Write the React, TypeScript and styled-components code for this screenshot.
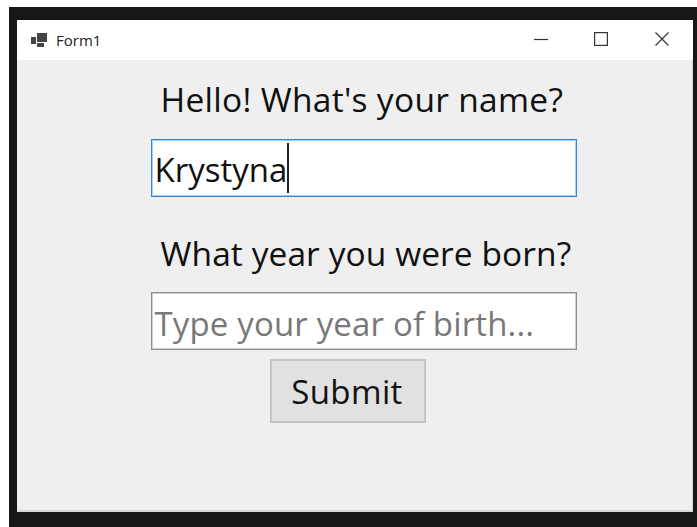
import React from "react";
import styled, { createGlobalStyle } from "styled-components";

const GlobalStyle = createGlobalStyle`
  html, body {
    margin: 0;
    padding: 0;
    background: #ffffff;
  }
`;

const App = () => {
  return (
    <>
      <GlobalStyle />
      <Screen>
        <Frame>
          <Window>
            <TitleBar>
              <AppIcon viewBox="0 0 16 14">
                <rect x="0" y="4" width="5" height="7" fill="#444" />
                <rect x="6" y="0" width="10" height="9" fill="#444" />
                <rect x="6" y="10" width="7" height="4" fill="#444" />
              </AppIcon>
              <Title>Form1</Title>
              <Controls>
                <ControlButton>
                  <svg width="14" height="14" viewBox="0 0 14 14">
                    <path d="M0 7.5h14" stroke="#333" strokeWidth="1.2" fill="none" />
                  </svg>
                </ControlButton>
                <ControlButton>
                  <svg width="14" height="14" viewBox="0 0 14 14">
                    <rect x="0.6" y="0.6" width="12.8" height="12.8" stroke="#333" strokeWidth="1.2" fill="none" />
                  </svg>
                </ControlButton>
                <ControlButton>
                  <svg width="14" height="14" viewBox="0 0 14 14">
                    <path d="M0.5 0.5l13 13M13.5 0.5l-13 13" stroke="#333" strokeWidth="1.2" fill="none" />
                  </svg>
                </ControlButton>
              </Controls>
            </TitleBar>
            <Content>
              <Label $tracking={0.3}>Hello! What's your name?</Label>
              <TextBox $focused>
                Krystyna
                <Caret />
              </TextBox>
              <SecondLabel $tracking={0.08}>What year you were born?</SecondLabel>
              <TextBox $placeholder>Type your year of birth...</TextBox>
              <SubmitRow>
                <SubmitButton>Submit</SubmitButton>
              </SubmitRow>
            </Content>
          </Window>
        </Frame>
      </Screen>
    </>
  );
};

export default App;

const Screen = styled.div`
  width: 697px;
  height: 527px;
  padding: 7px 0 0 9px;
  box-sizing: border-box;
  overflow: hidden;
`;

const Frame = styled.div`
  height: 100%;
  background: #171717;
  padding: 13px 4px 15px 8px;
  box-sizing: border-box;
`;

const Window = styled.div`
  height: 100%;
  display: flex;
  flex-direction: column;
  background: #efefef;
  font-family: "Open Sans", "Noto Sans", sans-serif;
  color: #111;
  box-shadow: inset -1px -2px 0 #d8d8d8;
`;

const TitleBar = styled.div`
  height: 40px;
  flex: none;
  display: flex;
  align-items: center;
  background: #ffffff;
  padding-left: 14px;
`;

const AppIcon = styled.svg`
  width: 16px;
  height: 14px;
  margin-right: 9px;
  margin-bottom: 1px;
`;

const Title = styled.span`
  font-size: 15px;
  color: #222;
`;

const Controls = styled.div`
  margin-left: auto;
  display: flex;
  padding: 0 1px 2px 0;
`;

const ControlButton = styled.div`
  width: 60.5px;
  height: 38px;
  display: flex;
  align-items: center;
  justify-content: center;
`;

const Content = styled.div`
  padding: 17px 0 0 134px;
  display: flex;
  flex-direction: column;
  align-items: flex-start;
`;

const Label = styled.div<{ $tracking: number }>`
  font-size: 33.5px;
  line-height: 44px;
  height: 44px;
  margin: 0 0 18px 9.5px;
  letter-spacing: ${(p) => p.$tracking}px;
  white-space: nowrap;
`;

const SecondLabel = styled(Label)`
  margin-top: 34px;
  margin-bottom: 17px;
`;

const TextBox = styled.div<{ $focused?: boolean; $placeholder?: boolean }>`
  width: 426px;
  height: 58px;
  box-sizing: border-box;
  display: flex;
  align-items: center;
  padding: ${(p) => (p.$placeholder ? 5 : 3)}px 0 0 2.5px;
  background: #ffffff;
  border: 1px solid ${(p) => (p.$focused ? "#2f86d4" : "#8e8e8e")};
  box-shadow: inset 0 0 0 1px ${(p) => (p.$focused ? "#a9d0f0" : "#d0d0d0")};
  color: ${(p) => (p.$placeholder ? "#787878" : "#111")};
  font-size: 33px;
  letter-spacing: ${(p) => (p.$placeholder ? 0.15 : 0)}px;
  white-space: nowrap;
`;

const Caret = styled.span`
  display: inline-block;
  width: 1.5px;
  height: 50px;
  margin-top: -3px;
  background: #222;
`;

const SubmitRow = styled.div`
  padding: 9px 0 0 119px;
`;

const SubmitButton = styled.button`
  width: 156px;
  height: 64px;
  box-sizing: border-box;
  background: #e1e1e1;
  border: 2px solid #c4c4c4;
  font-family: inherit;
  font-size: 33px;
  letter-spacing: 0.4px;
  color: #111;
  padding: 1px 2px 0 0;
`;
